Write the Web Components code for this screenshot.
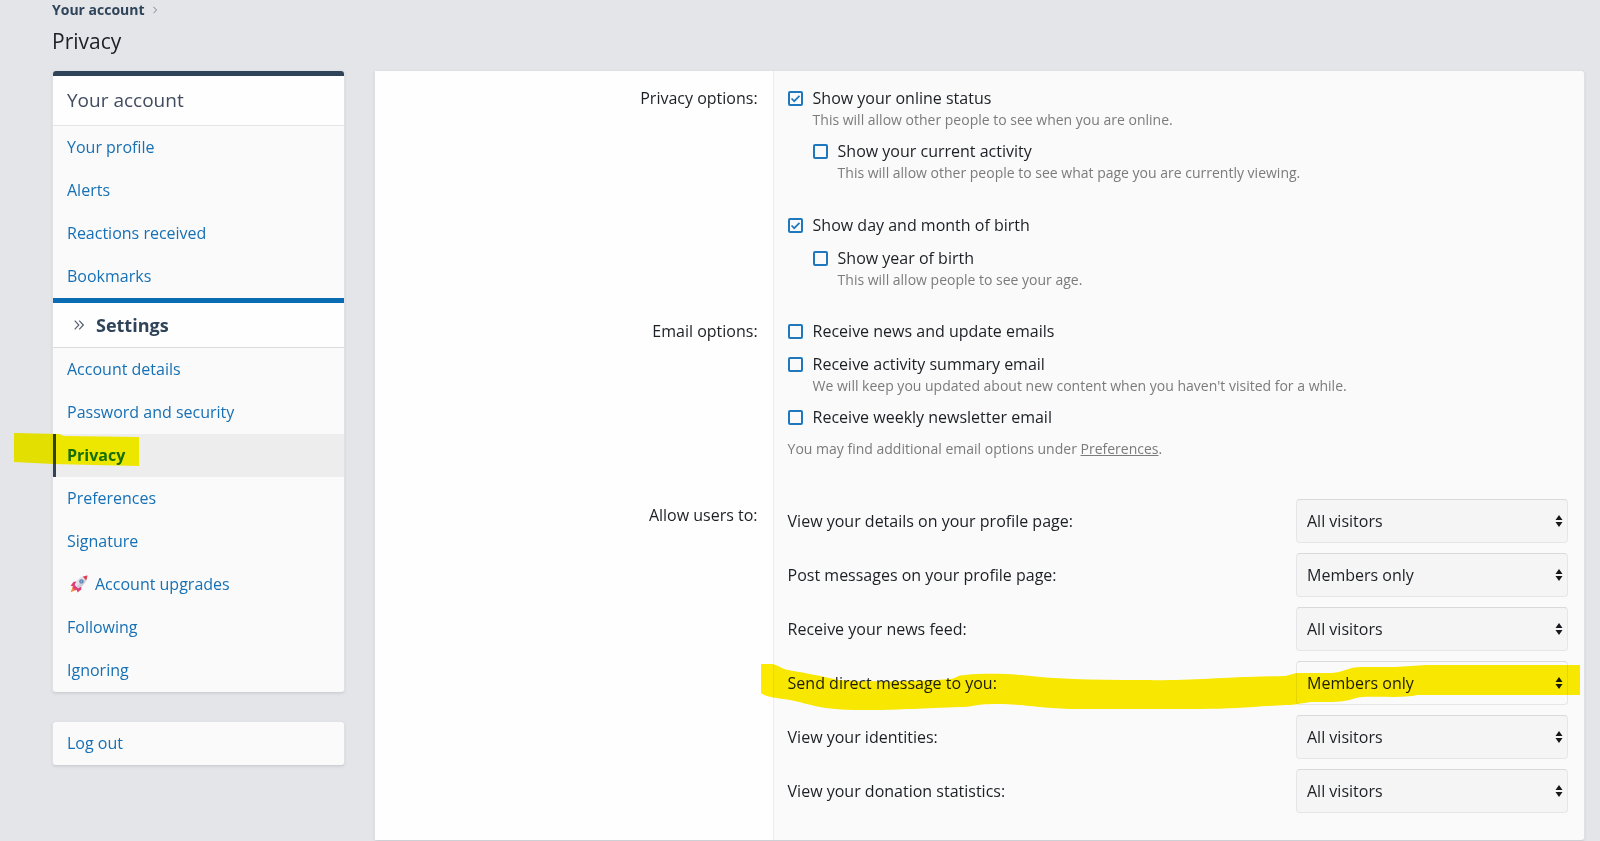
<!DOCTYPE html>
<html lang="en">
<head>
<meta charset="utf-8">
<meta name="viewport" content="width=device-width, initial-scale=1">
<title>Privacy</title>
<style>
  :root {
    --link: #1670b5;
    --accent: #0a6db3;
    --dark: #2f4359;
    --text: #1c1f24;
    --muted: #7b7b7b;
    --panel: #fafafa;
    --panel-light: #fefefe;
    --line: #e4e5e8;
  }
  body {
    margin: 0;
    background: #e3e5e9;
    color: var(--text);
    font: 16px/24px "Open Sans", "Noto Sans", sans-serif;
  }
</style>
</head>
<body>
<account-page>
  <bread-crumb slot="crumb" href="#account">Your account</bread-crumb>
  <span slot="title">Privacy</span>

  <block-card slot="side">
    <nav-header>Your account</nav-header>
    <nav-item href="#profile">Your profile</nav-item>
    <nav-item href="#alerts">Alerts</nav-item>
    <nav-item href="#reactions">Reactions received</nav-item>
    <nav-item href="#bookmarks">Bookmarks</nav-item>
    <nav-header minor>Settings</nav-header>
    <nav-item href="#details">Account details</nav-item>
    <nav-item href="#security">Password and security</nav-item>
    <nav-item href="#privacy" active>Privacy<marker-stroke slot="mark" kind="short"></marker-stroke></nav-item>
    <nav-item href="#preferences">Preferences</nav-item>
    <nav-item href="#signature">Signature</nav-item>
    <nav-item href="#upgrades"><rocket-icon slot="icon"></rocket-icon>Account upgrades</nav-item>
    <nav-item href="#following">Following</nav-item>
    <nav-item href="#ignoring">Ignoring</nav-item>
  </block-card>
  <block-card slot="side">
    <nav-item href="#logout">Log out</nav-item>
  </block-card>

  <block-card slot="main">
    <form-row label="Privacy options:">
      <check-option label="Show your online status" hint="This will allow other people to see when you are online." checked>
        <check-option label="Show your current activity" hint="This will allow other people to see what page you are currently viewing."></check-option>
      </check-option>
      <check-option label="Show day and month of birth" checked spaced>
        <check-option label="Show year of birth" hint="This will allow people to see your age."></check-option>
      </check-option>
    </form-row>
    <form-row label="Email options:">
      <check-option label="Receive news and update emails"></check-option>
      <check-option label="Receive activity summary email" hint="We will keep you updated about new content when you haven't visited for a while."></check-option>
      <check-option label="Receive weekly newsletter email"></check-option>
      <form-explain>You may find additional email options under <a href="#preferences">Preferences</a>.</form-explain>
    </form-row>
    <form-row label="Allow users to:" inputs>
      <privacy-select label="View your details on your profile page:" value="All visitors"></privacy-select>
      <privacy-select label="Post messages on your profile page:" value="Members only"></privacy-select>
      <privacy-select label="Receive your news feed:" value="All visitors"></privacy-select>
      <privacy-select label="Send direct message to you:" value="Members only" marked><marker-stroke slot="mark" kind="long"></marker-stroke></privacy-select>
      <privacy-select label="View your identities:" value="All visitors"></privacy-select>
      <privacy-select label="View your donation statistics:" value="All visitors"></privacy-select>
    </form-row>
  </block-card>
</account-page>

<script>
class BaseElement extends HTMLElement {
  constructor () {
    super()
    this.attachShadow({ mode: 'open' })
  }

  connectedCallback () {
    this.shadowRoot.innerHTML = this.render()
  }

  attr (name) {
    return this.getAttribute(name) || ''
  }
}

class AccountPage extends BaseElement {
  render () {
    return `
      <style>
        :host {
          display: block;
          padding: 0 15px 0 52px;
        }
        h1 {
          margin: 7px 0 14px;
          font-size: 21px;
          font-weight: 400;
          line-height: 30px;
        }
        .columns {
          display: grid;
          grid-template-columns: 293px minmax(0, 1fr);
          gap: 29px;
          align-items: start;
        }
        aside {
          display: grid;
          gap: 28px;
        }
      </style>
      <header>
        <slot name="crumb"></slot>
        <h1><slot name="title"></slot></h1>
      </header>
      <div class="columns">
        <aside><slot name="side"></slot></aside>
        <main><slot name="main"></slot></main>
      </div>
    `
  }
}

class BreadCrumb extends BaseElement {
  render () {
    return `
      <style>
        :host { display: block; }
        nav {
          display: flex;
          align-items: center;
          gap: 8px;
          line-height: 19px;
        }
        a {
          color: var(--dark);
          font-size: 14px;
          font-weight: 700;
          text-decoration: none;
        }
        svg { display: block; }
      </style>
      <nav aria-label="Breadcrumb">
        <a href="${this.attr('href')}"><slot></slot></a>
        <svg width="4" height="8" viewBox="0 0 4 8" fill="none" stroke="#7d838b"><path d="M.5 .8 3.5 4 .5 7.2"/></svg>
      </nav>
    `
  }
}

class BlockCard extends BaseElement {
  render () {
    return `
      <style>
        :host {
          display: block;
          border: 1px solid #dfe1e5;
          border-bottom-color: #cdd0d4;
          border-radius: 4px;
          background: var(--panel);
          box-shadow: 0 1px 3px rgba(0, 0, 0, .08);
        }
      </style>
      <slot></slot>
    `
  }
}

class NavHeader extends BaseElement {
  render () {
    const minor = this.hasAttribute('minor')
    return `
      <style>
        :host { display: block; }
        h2, h3 {
          display: flex;
          align-items: center;
          margin: 0;
          padding: 0 14px;
          background: var(--panel-light);
        }
        h2 {
          border-top: 5px solid var(--dark);
          border-bottom: 1px solid var(--line);
          border-radius: 3px 3px 0 0;
          color: #414c60;
          font-size: 19px;
          font-weight: 400;
          line-height: 49px;
        }
        h3 {
          gap: 12px;
          padding-left: 21px;
          border-top: 5px solid var(--accent);
          border-bottom: 1px solid #d9dbde;
          color: var(--dark);
          font-size: 18px;
          font-weight: 700;
          line-height: 44px;
        }
      </style>
      ${minor
        ? `<h3>
            <svg width="10" height="10" viewBox="0 0 10 10" fill="none" stroke="#59636f" stroke-width="1.2"><path d="M.7 .7 4.8 5 .7 9.3M5.2 .7 9.3 5 5.2 9.3"/></svg>
            <slot></slot>
          </h3>`
        : '<h2><slot></slot></h2>'}
    `
  }
}

class NavItem extends BaseElement {
  render () {
    return `
      <style>
        :host {
          display: block;
          position: relative;
        }
        a {
          display: flex;
          align-items: center;
          padding: 9px 14px 10px 11px;
          border-left: 3px solid transparent;
          color: var(--link);
          text-decoration: none;
        }
        :host([active]) a {
          border-left-color: var(--dark);
          background: #ededed;
          font-weight: 700;
        }
      </style>
      <a href="${this.attr('href')}"${this.hasAttribute('active') ? ' aria-current="page"' : ''}>
        <slot name="icon"></slot><slot></slot>
      </a>
      <slot name="mark"></slot>
    `
  }
}

class RocketIcon extends BaseElement {
  render () {
    return `
      <style>
        :host {
          display: block;
          padding: 0 7px 0 3px;
        }
        svg { display: block; }
      </style>
      <svg width="18" height="18" viewBox="0 0 18 18">
        <path d="M3 11 .6 17.2 7.4 14.4z" fill="#f58b3c"/>
        <path d="M7.4 6.6 3.6 6.8 .6 10.8l4.6 .6zM11.4 10.6l-.2 4L7.4 17.6l-.8-4.4z" fill="#e5396f"/>
        <path d="M4.4 9.4 2.6 12l1.2 2.2 2.4 1L9 13.4z" fill="#e0407c"/>
        <path d="M4.8 9.8C6.6 5.4 10.4 1.4 17.4 .6 16.6 8 12.4 11.8 8.2 13.4z" fill="#cfcfdb"/>
        <path d="M4.8 9.8C6.6 5.4 10.4 1.4 17.4 .6L6.5 11.7z" fill="#e2e2ea"/>
        <path d="M12.8 1.8C14.2 1.2 15.7 .8 17.4 .6c-.2 1.7-.6 3.2-1.2 4.6z" fill="#e23d4e"/>
        <circle cx="11.4" cy="6.4" r="2.2" fill="#5f82b3"/>
        <circle cx="11.4" cy="6.4" r="1" fill="#8fb4dd"/>
      </svg>
    `
  }
}

class FormRow extends BaseElement {
  render () {
    return `
      <style>
        :host { display: block; }
        section {
          display: grid;
          grid-template-columns: minmax(0, 49fr) minmax(0, 100fr);
        }
        h2 {
          margin: 0;
          padding: 15px 15px 14px;
          background: var(--panel-light);
          font-size: 16px;
          font-weight: 400;
          line-height: 24px;
          text-align: right;
        }
        .fields {
          display: grid;
          gap: 9px;
          padding: 15px 16px 14px 14px;
          border-left: 1px solid #ebecee;
        }
        :host([inputs]) h2 { padding-top: 20px; }
        :host([inputs]) .fields {
          gap: 10px;
          padding-top: 16px;
          padding-bottom: 27px;
        }
      </style>
      <section aria-labelledby="title">
        <h2 id="title">${this.attr('label')}</h2>
        <div class="fields"><slot></slot></div>
      </section>
    `
  }
}

class CheckOption extends BaseElement {
  render () {
    const hint = this.attr('hint')
    return `
      <style>
        :host { display: block; }
        :host([spaced]) { padding-top: 21px; }
        label {
          display: flex;
          align-items: center;
          gap: 10px;
        }
        input {
          appearance: none;
          flex: none;
          width: 15px;
          height: 15px;
          margin: 0;
          border: 2px solid #1f78bd;
          border-radius: 2px;
        }
        input:checked {
          background: url("data:image/svg+xml,%3Csvg xmlns='http://www.w3.org/2000/svg' viewBox='0 0 11 11'%3E%3Cpath d='M1.5 5.5 4.2 8.2 9.5 2.9' fill='none' stroke='%231f78bd' stroke-width='1.7'/%3E%3C/svg%3E") center / 11px 11px no-repeat;
        }
        p {
          margin: 0 0 0 25px;
          color: var(--muted);
          font-size: 14px;
          line-height: 20px;
        }
        ::slotted(check-option) {
          margin: 9px 0 0 25px;
        }
      </style>
      <label><input type="checkbox"${hint ? ' aria-describedby="hint"' : ''}${this.hasAttribute('checked') ? ' checked' : ''}>${this.attr('label')}</label>
      ${hint ? `<p id="hint">${hint}</p>` : ''}
      <slot></slot>
    `
  }
}

class FormExplain extends BaseElement {
  render () {
    return `
      <style>
        :host {
          display: block;
          padding: 1px 0 10px;
          color: var(--muted);
          font-size: 14px;
          line-height: 20px;
        }
        ::slotted(a) { color: inherit; }
      </style>
      <slot></slot>
    `
  }
}

class PrivacySelect extends BaseElement {
  render () {
    const options = ['All visitors', 'Members only']
      .map(name => `<option${name === this.attr('value') ? ' selected' : ''}>${name}</option>`)
      .join('')
    return `
      <style>
        :host {
          display: grid;
          grid-template-columns: minmax(0, 1fr) 272px;
          align-items: center;
          position: relative;
        }
        .control {
          display: grid;
          align-items: center;
        }
        select, svg { grid-area: 1 / 1; }
        select {
          appearance: none;
          box-sizing: border-box;
          width: 100%;
          height: 44px;
          padding: 0 20px 0 10px;
          border: 1px solid #e6e6e8;
          border-top-color: #d8d9db;
          border-radius: 4px;
          background: #f5f5f5;
          color: inherit;
          font: inherit;
        }
        :host([marked]) select { background: var(--panel); }
        svg {
          justify-self: end;
          margin-right: 5px;
          pointer-events: none;
        }
      </style>
      <label for="choice">${this.attr('label')}</label>
      <div class="control">
        <select id="choice">${options}</select>
        <svg width="8" height="12" viewBox="0 0 8 12" fill="#17191c"><path d="M4 0 7.5 5H.5zM4 12 .5 7h7z"/></svg>
      </div>
      <slot name="mark"></slot>
    `
  }
}

// Highlighter strokes, laid over the row they are slotted into
const strokes = Object.freeze({
  short: {
    box: '0 0 125 33',
    color: '#fff900',
    path: 'M0 0 45 1 50 3 125 4V33L80 32 39 31 0 29z'
  },
  long: {
    box: '0 0 819 50',
    color: '#fdec00',
    path: 'M0 3H11C17 4 21 8 27 9 45 12 60 15 77 19 100 21 160 21 189 18 197 17 195 14 204 14 225 12 245 13 260 14 290 18 330 19 379 19 430 20 455 16 524 15 530 14 532 12 538 12H570C584 11 586 6 600 6L634 6 665 4H819V34H656C640 38 605 34 595 37 580 42 565 41 550 41 535 43 535 44 524 44 490 46 470 48 440 48H320C280 48 265 43 235 43 210 43 215 46 200 46 160 47 140 49 110 49 60 50 50 43 29 39 15 37 5 36 0 32z'
  }
})

class MarkerStroke extends BaseElement {
  render () {
    const { box, color, path } = strokes[this.attr('kind')]
    return `
      <style>
        :host {
          position: absolute;
          mix-blend-mode: multiply;
          pointer-events: none;
        }
        :host([kind="short"]) {
          top: -1px;
          left: -39px;
          width: 125px;
          height: 33px;
        }
        :host([kind="long"]) {
          top: 0;
          left: -27px;
          width: calc(100% + 39px);
          height: 50px;
        }
        svg { display: block; }
      </style>
      <svg width="100%" height="100%" viewBox="${box}" preserveAspectRatio="none" aria-hidden="true"><path d="${path}" fill="${color}"/></svg>
    `
  }
}

window.customElements.define('account-page', AccountPage)
window.customElements.define('bread-crumb', BreadCrumb)
window.customElements.define('block-card', BlockCard)
window.customElements.define('nav-header', NavHeader)
window.customElements.define('nav-item', NavItem)
window.customElements.define('rocket-icon', RocketIcon)
window.customElements.define('form-row', FormRow)
window.customElements.define('check-option', CheckOption)
window.customElements.define('form-explain', FormExplain)
window.customElements.define('privacy-select', PrivacySelect)
window.customElements.define('marker-stroke', MarkerStroke)
</script>
</body>
</html>
